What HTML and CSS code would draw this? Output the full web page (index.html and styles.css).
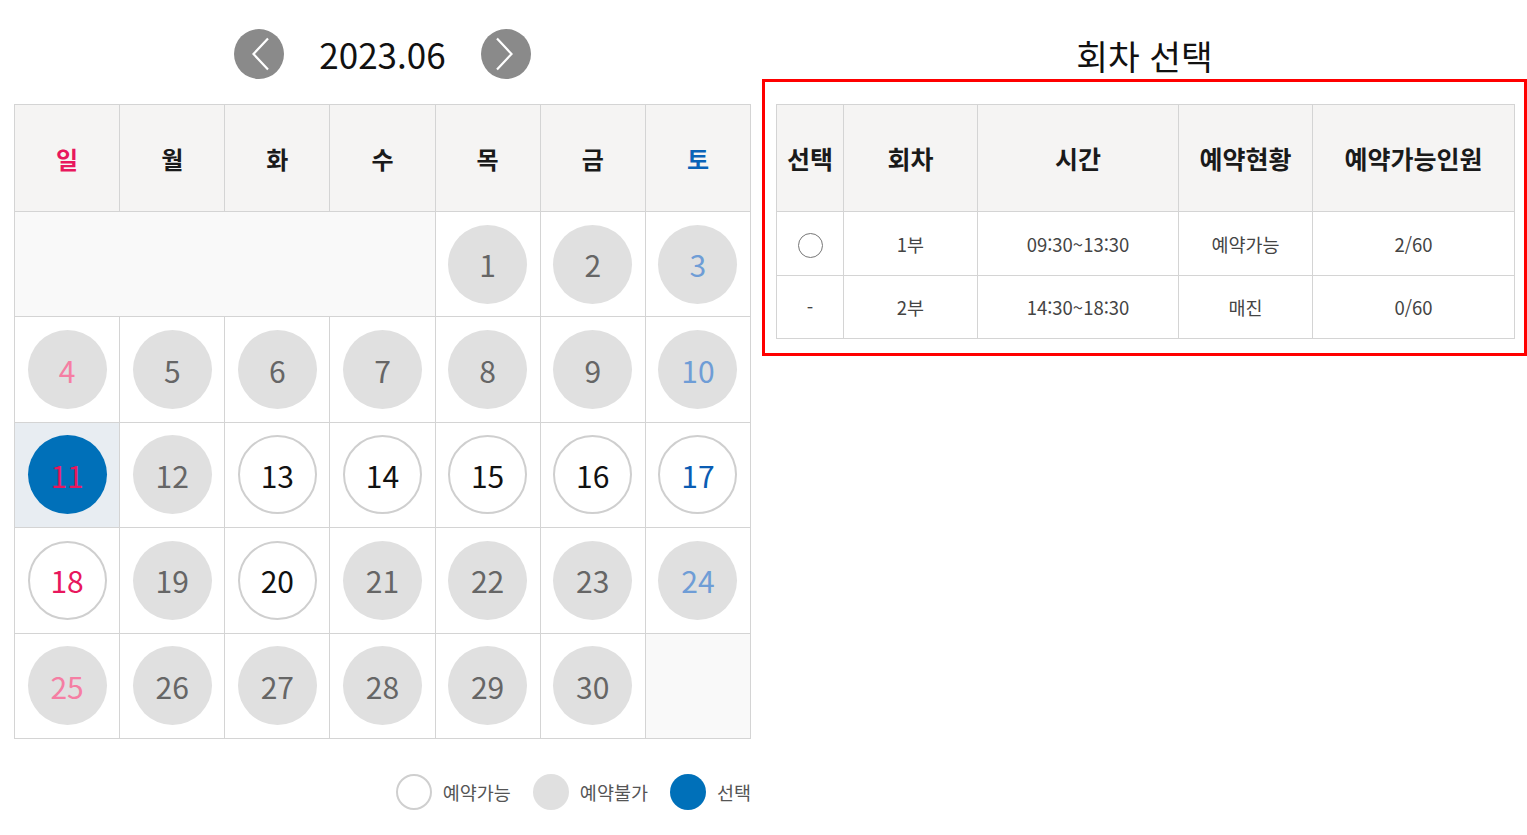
FILE: index.html
```html
<!DOCTYPE html>
<html lang="ko">
<head>
<meta charset="utf-8">
<title>예약 달력</title>
<link rel="stylesheet" href="styles.css">
</head>
<body>
<div class="page">
  <section class="calendar-col">
    <div class="month-nav">
      <button class="nav-btn" aria-label="이전 달">
        <svg viewBox="0 0 50 50" width="50" height="50"><polyline points="34,9.5 19.5,25 34,40.5" fill="none" stroke="#fff" stroke-width="2.2"/></svg>
      </button>
      <span class="month-title">2023.06</span>
      <button class="nav-btn" aria-label="다음 달">
        <svg viewBox="0 0 50 50" width="50" height="50"><polyline points="16,9.5 30.5,25 16,40.5" fill="none" stroke="#fff" stroke-width="2.2"/></svg>
      </button>
    </div>
    <table class="calendar">
      <thead>
        <tr>
          <th class="sun">일</th><th>월</th><th>화</th><th>수</th><th>목</th><th>금</th><th class="sat">토</th>
        </tr>
      </thead>
      <tbody>
        <tr>
          <td colspan="4" class="empty"></td>
          <td><span class="day off">1</span></td>
          <td><span class="day off">2</span></td>
          <td><span class="day off sat">3</span></td>
        </tr>
        <tr>
          <td><span class="day off sun">4</span></td>
          <td><span class="day off">5</span></td>
          <td><span class="day off">6</span></td>
          <td><span class="day off">7</span></td>
          <td><span class="day off">8</span></td>
          <td><span class="day off">9</span></td>
          <td><span class="day off sat">10</span></td>
        </tr>
        <tr>
          <td class="selected-cell"><span class="day selected sun">11</span></td>
          <td><span class="day off">12</span></td>
          <td><span class="day on">13</span></td>
          <td><span class="day on">14</span></td>
          <td><span class="day on">15</span></td>
          <td><span class="day on">16</span></td>
          <td><span class="day on sat">17</span></td>
        </tr>
        <tr>
          <td><span class="day on sun">18</span></td>
          <td><span class="day off">19</span></td>
          <td><span class="day on">20</span></td>
          <td><span class="day off">21</span></td>
          <td><span class="day off">22</span></td>
          <td><span class="day off">23</span></td>
          <td><span class="day off sat">24</span></td>
        </tr>
        <tr>
          <td><span class="day off sun">25</span></td>
          <td><span class="day off">26</span></td>
          <td><span class="day off">27</span></td>
          <td><span class="day off">28</span></td>
          <td><span class="day off">29</span></td>
          <td><span class="day off">30</span></td>
          <td class="empty"></td>
        </tr>
      </tbody>
    </table>
    <div class="legend">
      <span class="legend-item"><span class="dot dot-on"></span>예약가능</span>
      <span class="legend-item"><span class="dot dot-off"></span>예약불가</span>
      <span class="legend-item"><span class="dot dot-sel"></span>선택</span>
    </div>
  </section>

  <section class="session-col">
    <h2 class="session-title">회차 선택</h2>
    <div class="session-box">
      <table class="sessions">
        <colgroup>
          <col class="c1"><col class="c2"><col class="c3"><col class="c4"><col class="c5">
        </colgroup>
        <thead>
          <tr><th>선택</th><th>회차</th><th>시간</th><th>예약현황</th><th>예약가능인원</th></tr>
        </thead>
        <tbody>
          <tr class="r1">
            <td><span class="radio"></span></td>
            <td>1부</td>
            <td>09:30~13:30</td>
            <td>예약가능</td>
            <td>2/60</td>
          </tr>
          <tr class="r2">
            <td>-</td>
            <td>2부</td>
            <td>14:30~18:30</td>
            <td>매진</td>
            <td>0/60</td>
          </tr>
        </tbody>
      </table>
    </div>
  </section>
</div>
</body>
</html>
```

FILE: styles.css
```css
* { box-sizing: border-box; }
body {
  margin: 0;
  background: #fff;
  font-family: "Noto Sans CJK KR", "Noto Sans", sans-serif;
  color: #111;
}
.page {
  display: flex;
  align-items: flex-start;
  padding-left: 14px;
}
.calendar-col {
  width: 737px;
  flex: none;
}
.month-nav {
  display: flex;
  justify-content: center;
  align-items: center;
  gap: 35px;
  height: 50px;
  margin-top: 29px;
  margin-bottom: 25px;
}
.nav-btn {
  width: 50px;
  height: 50px;
  border: none;
  padding: 0;
  border-radius: 50%;
  background: #8a8a8a;
  display: flex;
  align-items: center;
  justify-content: center;
}
.nav-btn svg { display: block; }
.month-title {
  font-size: 35px;
  line-height: 50px;
  color: #111;
}

.calendar {
  width: 737px;
  border-collapse: collapse;
  table-layout: fixed;
}
.calendar th,
.calendar td {
  border: 1px solid #d4d4d4;
  text-align: center;
  vertical-align: middle;
  padding: 0;
}
.calendar th {
  height: 107px;
  background: #f5f4f3;
  font-size: 24px;
  font-weight: 700;
  color: #1a1a1a;
}
.calendar th.sun { color: #e8175d; }
.calendar th.sat { color: #0a63b8; }
.calendar td { height: 105.4px; }
.calendar td.empty { background: #f9f9f9; }
.calendar td.selected-cell { background: #e8edf2; }

.day {
  display: inline-flex;
  align-items: center;
  justify-content: center;
  width: 79px;
  height: 79px;
  border-radius: 50%;
  font-size: 30px;
  line-height: 1;
  vertical-align: middle;
}
.day.off { background: #e0e0e0; color: #666; }
.day.off.sun { color: #f57ea3; }
.day.off.sat { color: #6f9dd6; }
.day.on { background: #fff; border: 2px solid #cfcfcf; color: #111; }
.day.on.sun { color: #e8175d; }
.day.on.sat { color: #0a5cb3; }
.day.selected { background: #0070b9; color: #e8175d; }

.legend {
  display: flex;
  justify-content: flex-end;
  align-items: center;
  gap: 22px;
  margin-top: 35px;
  height: 36px;
}
.legend-item {
  display: flex;
  align-items: center;
  gap: 11px;
  font-size: 18.5px;
  color: #555;
}
.dot {
  width: 36px;
  height: 36px;
  border-radius: 50%;
  flex: none;
}
.dot-on { border: 2px solid #cfcfcf; background: #fff; }
.dot-off { background: #e0e0e0; }
.dot-sel { background: #0070b9; }

.session-col {
  width: 765px;
  margin-left: 11px;
  flex: none;
}
.session-title {
  margin: 31px 0 0;
  height: 48px;
  line-height: 48px;
  text-align: center;
  font-size: 34.5px;
  font-weight: 400;
  color: #111;
}
.session-box {
  border: 3px solid #ff0000;
  padding: 22px 10px 14px 11px;
}
.sessions {
  width: 738px;
  border-collapse: collapse;
  table-layout: fixed;
}
.sessions .c1 { width: 67px; }
.sessions .c2 { width: 134px; }
.sessions .c3 { width: 201px; }
.sessions .c4 { width: 134px; }
.sessions .c5 { width: 202px; }
.sessions th,
.sessions td {
  border: 1px solid #d4d4d4;
  text-align: center;
  vertical-align: middle;
  padding: 0;
}
.sessions th {
  height: 107px;
  background: #f5f4f3;
  font-size: 25px;
  font-weight: 700;
  color: #1a1a1a;
}
.sessions td {
  font-size: 18.5px;
  color: #444;
}
.sessions .r1 td { height: 64px; }
.sessions .r2 td { height: 63px; }
.radio {
  display: inline-block;
  width: 25px;
  height: 25px;
  border: 1.5px solid #777;
  border-radius: 50%;
  vertical-align: middle;
}
```
